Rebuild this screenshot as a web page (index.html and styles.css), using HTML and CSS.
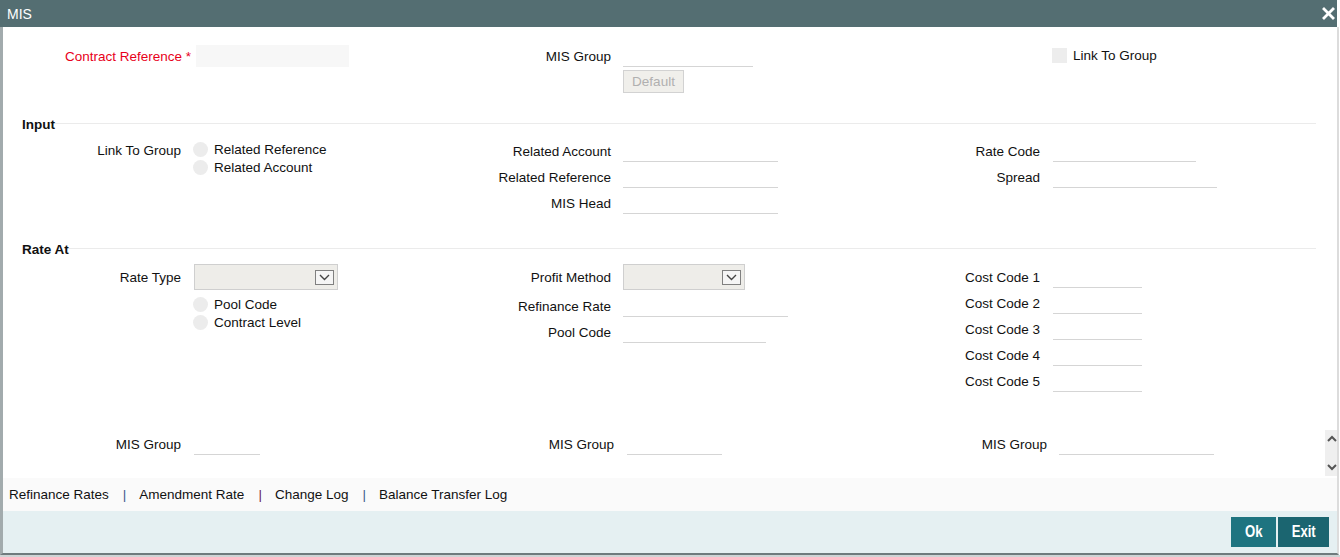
FILE: index.html
```html
<!DOCTYPE html>
<html>
<head>
<meta charset="utf-8">
<title>MIS</title>
<link rel="stylesheet" href="styles.css">
</head>
<body>
<div class="window">
  <div class="titlebar">
    <span class="title">MIS</span>
    <span class="close"><svg width="13" height="13" viewBox="0 0 13 13"><path d="M2 2 L11 11 M11 2 L2 11" stroke="#fff" stroke-width="2.8" stroke-linecap="square"/></svg></span>
  </div>
  <div class="body">
    <div class="scroll">
      <div class="grid3 top">
        <div class="col">
          <div class="row g5">
            <label class="lbl req">Contract Reference <span class="ast">*</span></label>
            <input class="filled" type="text">
          </div>
        </div>
        <div class="col">
          <div class="row">
            <label class="lbl">MIS Group</label>
            <input class="fld w130" type="text">
          </div>
          <button class="btn-default">Default</button>
        </div>
        <div class="col">
          <div class="chkrow">
            <span class="chk"></span>
            <span>Link To Group</span>
          </div>
        </div>
      </div>

      <div class="fs-head fs-input"><span class="fs-title">Input</span><span class="rule"></span></div>
      <div class="grid3 sec-input">
        <div class="col">
          <div class="rrow">
            <label class="lbl lh26">Link To Group</label>
            <div class="stack mt2">
              <div class="ropt"><span class="radio"></span><span>Related Reference</span></div>
              <div class="ropt"><span class="radio"></span><span>Related Account</span></div>
            </div>
          </div>
        </div>
        <div class="col">
          <div class="row"><label class="lbl">Related Account</label><input class="fld w155" type="text"></div>
          <div class="row"><label class="lbl">Related Reference</label><input class="fld w155" type="text"></div>
          <div class="row"><label class="lbl">MIS Head</label><input class="fld w155" type="text"></div>
        </div>
        <div class="col c3">
          <div class="row"><label class="lbl">Rate Code</label><input class="fld w143" type="text"></div>
          <div class="row"><label class="lbl">Spread</label><input class="fld w164" type="text"></div>
        </div>
      </div>

      <div class="fs-head fs-rate"><span class="fs-title">Rate At</span><span class="rule"></span></div>
      <div class="grid3 sec-rate">
        <div class="col">
          <div class="row g13">
            <label class="lbl">Rate Type</label>
            <div class="select w144"><span class="arrow"><svg width="11" height="7" viewBox="0 0 11 7"><path d="M1 1 L5.5 5.5 L10 1" fill="none" stroke="#444" stroke-width="1.4"/></svg></span></div>
          </div>
          <div class="stack indent mt5">
            <div class="ropt"><span class="radio"></span><span>Pool Code</span></div>
            <div class="ropt"><span class="radio"></span><span>Contract Level</span></div>
          </div>
        </div>
        <div class="col">
          <div class="row">
            <label class="lbl">Profit Method</label>
            <div class="select w122"><span class="arrow"><svg width="11" height="7" viewBox="0 0 11 7"><path d="M1 1 L5.5 5.5 L10 1" fill="none" stroke="#444" stroke-width="1.4"/></svg></span></div>
          </div>
          <div class="row mt3"><label class="lbl">Refinance Rate</label><input class="fld w165" type="text"></div>
          <div class="row"><label class="lbl">Pool Code</label><input class="fld w143" type="text"></div>
        </div>
        <div class="col c3">
          <div class="row"><label class="lbl">Cost Code 1</label><input class="fld w89" type="text"></div>
          <div class="row"><label class="lbl">Cost Code 2</label><input class="fld w89" type="text"></div>
          <div class="row"><label class="lbl">Cost Code 3</label><input class="fld w89" type="text"></div>
          <div class="row"><label class="lbl">Cost Code 4</label><input class="fld w89" type="text"></div>
          <div class="row"><label class="lbl">Cost Code 5</label><input class="fld w89" type="text"></div>
        </div>
      </div>

      <div class="grid3 sec-mis">
        <div class="col">
          <div class="row g13"><label class="lbl">MIS Group</label><input class="fld w66" type="text"></div>
        </div>
        <div class="col">
          <div class="row g13"><label class="lbl l181">MIS Group</label><input class="fld w95" type="text"></div>
        </div>
        <div class="col">
          <div class="row"><label class="lbl l185">MIS Group</label><input class="fld w155" type="text"></div>
        </div>
      </div>

      <div class="scrollbar">
        <svg width="12" height="10" viewBox="0 0 12 10"><path d="M3 7 L7 3 L11 7" fill="none" stroke="#555" stroke-width="2"/></svg>
        <svg width="12" height="10" viewBox="0 0 12 10"><path d="M3 3 L7 7 L11 3" fill="none" stroke="#555" stroke-width="2"/></svg>
      </div>
    </div>

    <div class="tabs">
      <a class="tab">Refinance Rates</a><span class="sep s1">|</span>
      <a class="tab">Amendment Rate</a><span class="sep s2">|</span>
      <a class="tab">Change Log</a><span class="sep s1">|</span>
      <a class="tab">Balance Transfer Log</a>
    </div>

    <div class="footer">
      <button class="fbtn ok"><span class="cond">Ok</span></button>
      <button class="fbtn exit"><span class="cond">Exit</span></button>
    </div>
  </div>
  <div class="edge"></div>
</div>
</body>
</html>
```

FILE: styles.css
```css
* { box-sizing: border-box; }

body {
  margin: 0;
  font-family: "Liberation Sans", Arial, sans-serif;
  font-size: 13.5px;
  color: #111;
  background: #fff;
  overflow: hidden;
}

.window {
  width: 1340px;
  height: 557px;
  display: flex;
  flex-direction: column;
}

.titlebar {
  height: 27px;
  flex: none;
  margin-right: 3px;
  background: #546e72;
  color: #fff;
  display: flex;
  align-items: center;
  justify-content: space-between;
  padding: 0 2px 0 7px;
}

.title { font-size: 14px; }
.close svg { display: block; }

.body {
  border-left: 3px solid #a2abad;
  border-right: 2px solid #dcdcdc;
  border-bottom: 2px solid #6f7b7d;
  margin-right: 1px;
  display: flex;
  flex-direction: column;
}

.edge {
  height: 2px;
  background: #cfd4d5;
}

.scroll {
  height: 451px;
  position: relative;
  flex: none;
}

.grid3 {
  display: grid;
  grid-template-columns: 430px 429px 1fr;
}

.col {
  display: flex;
  flex-direction: column;
  align-items: flex-start;
}

.row {
  display: flex;
  align-items: center;
  height: 26px;
  gap: 12px;
}

.c3 .row { gap: 13px; }
.row.g5 { gap: 5px; }
.row.g13 { gap: 13px; }
.mt3 { margin-top: 3px; }
.mt2 { margin-top: 2px; }
.mt5 { margin-top: 5px; }

.lbl {
  width: 178px;
  flex: none;
  text-align: right;
  white-space: nowrap;
}
.lbl.l181 { width: 181px; }
.lbl.l185 { width: 185px; }
.lbl.req { width: 188px; color: #e8001a; }
.lbl.lh26 { line-height: 26px; height: 26px; }

.filled {
  width: 153px;
  height: 22px;
  border: 0;
  background: #f7f7f7;
  padding: 0;
  font: inherit;
}

.fld {
  height: 21px;
  border: 0;
  border-bottom: 1px solid #d5d5d5;
  background: transparent;
  padding: 0;
  font: inherit;
  outline: none;
}

.w66 { width: 66px; }
.w89 { width: 89px; }
.w95 { width: 95px; }
.w122 { width: 122px; }
.w130 { width: 130px; }
.w143 { width: 143px; }
.w144 { width: 144px; }
.w155 { width: 155px; }
.w164 { width: 164px; }
.w165 { width: 165px; }

.btn-default {
  margin: 1px 0 0 190px;
  width: 61px;
  height: 23px;
  background: #f0efeb;
  border: 1px solid #d2d2d2;
  color: #b0b0b0;
  font: inherit;
  padding: 0;
}

.top { padding-top: 16px; }

.chkrow {
  margin-left: 190px;
  height: 24px;
  display: flex;
  align-items: center;
  gap: 6px;
}

.chk {
  width: 15px;
  height: 15px;
  background: #ededed;
}

.fs-head {
  display: flex;
  align-items: center;
  height: 18px;
  padding-left: 19px;
  margin-right: 21px;
}
.fs-title { font-weight: bold; }
.rule {
  flex: 1;
  height: 1px;
  background: #ebebeb;
  margin-top: -2px;
}

.fs-input { margin-top: 22px; }
.sec-input { margin-top: 5px; }
.fs-rate { margin-top: 24px; }
.sec-rate { margin-top: 6px; }
.sec-mis { margin-top: 37px; }

.rrow {
  display: flex;
  align-items: flex-start;
  gap: 12px;
}

.stack {
  display: flex;
  flex-direction: column;
}
.stack.indent { margin-left: 190px; }

.ropt {
  display: flex;
  align-items: center;
  gap: 6px;
  height: 18px;
}

.radio {
  width: 15px;
  height: 15px;
  border-radius: 50%;
  background: #ececec;
}

.select {
  height: 26px;
  background: #eeede9;
  border: 1px solid #cfcfcf;
  display: flex;
  align-items: center;
  justify-content: flex-end;
  padding-right: 3px;
}

.arrow {
  width: 19px;
  height: 15px;
  border: 1px solid #808080;
  background: #f5f5f5;
  display: flex;
  align-items: center;
  justify-content: center;
}
.arrow svg { display: block; }

.scrollbar {
  position: absolute;
  right: 0;
  top: 403px;
  width: 12px;
  height: 46px;
  background: #efefef;
  display: flex;
  flex-direction: column;
  justify-content: space-between;
  padding: 4px 0 4px;
}
.scrollbar svg { display: block; }

.tabs {
  height: 33px;
  flex: none;
  background: #fafafa;
  display: flex;
  align-items: center;
  padding-left: 6px;
}
.tab { color: #111; }
.sep { margin: 0 13px 0 14px; color: #3a5a8c; }
.sep.s2 { color: #6a1a55; }

.footer {
  height: 42px;
  flex: none;
  background: #e5f0f2;
  display: flex;
  justify-content: flex-end;
  align-items: flex-start;
  gap: 2px;
  padding: 6px 8px 0 0;
}

.fbtn {
  height: 30px;
  border: 0;
  color: #fff;
  font-family: "Liberation Sans", Arial, sans-serif;
  font-weight: bold;
  font-size: 16px;
  padding: 0;
}
.cond {
  display: inline-block;
  transform: scaleX(0.82);
}
.fbtn.ok { width: 45px; background: #1e7480; }
.fbtn.exit { width: 51px; background: #1b6570; }
```
